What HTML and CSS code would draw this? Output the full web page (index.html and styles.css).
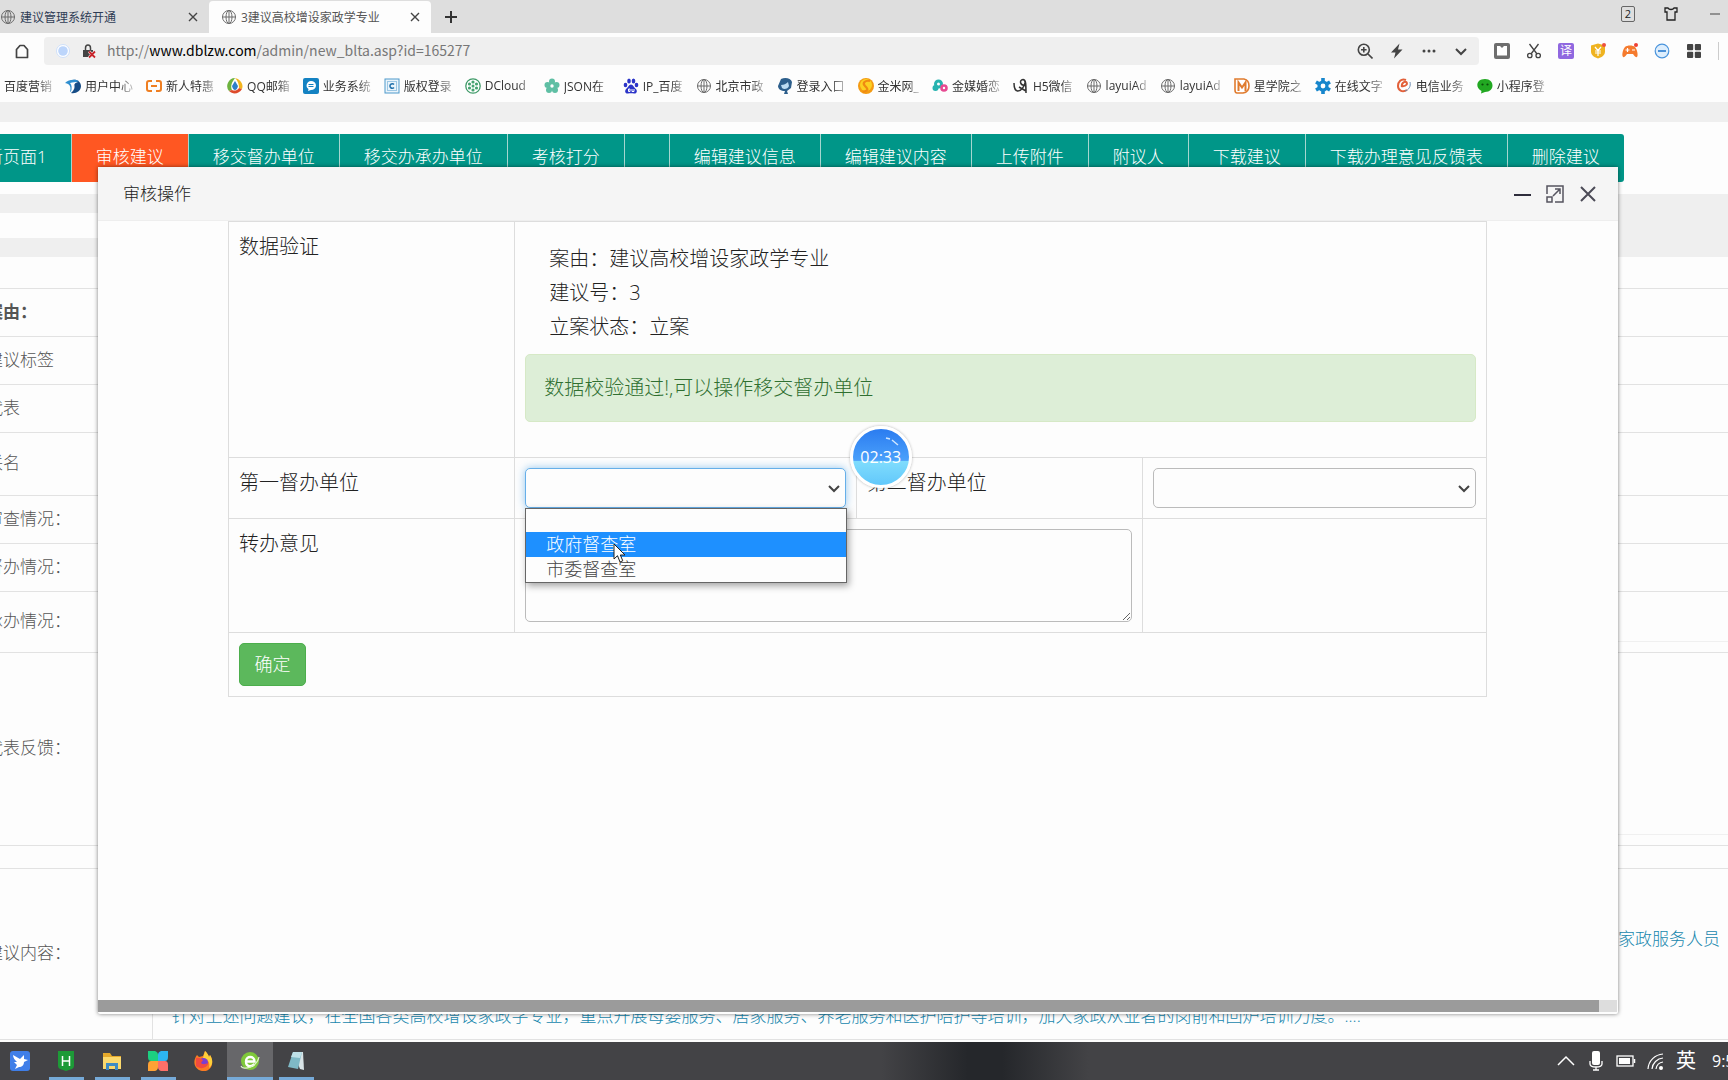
FILE: index.html
```html
<!DOCTYPE html>
<html lang="zh-CN">
<head>
<meta charset="utf-8">
<title>3建议高校增设家政学专业</title>
<link rel="stylesheet" href="styles.css">
</head>
<body>
<svg class="defs" aria-hidden="true">
  <symbol id="globe" viewBox="0 0 16 16"><g fill="none" stroke="#6b6b6b"><circle cx="8" cy="8" r="6.5"/><ellipse cx="8" cy="8" rx="3" ry="6.5"/><path d="M8 1.5v13M1.5 8h13"/></g></symbol>
  <symbol id="cross" viewBox="0 0 16 16"><path d="M4 4l8 8M12 4l-8 8" stroke="#444" stroke-width="1.4" fill="none"/></symbol>
  <symbol id="chevron" viewBox="0 0 16 16"><path d="M3 6l5 5 5-5" stroke="#444" stroke-width="2" fill="none"/></symbol>
</svg>

<header class="browser">
  <div class="tabs">
    <div class="tab"><svg class="ic"><use href="#globe"/></svg><span class="tab-name">建议管理系统开通</span><button class="plain" aria-label="关闭标签"><svg class="ic"><use href="#cross"/></svg></button></div>
    <div class="tab tab-on"><svg class="ic"><use href="#globe"/></svg><span class="tab-name">3建议高校增设家政学专业</span><button class="plain" aria-label="关闭标签"><svg class="ic"><use href="#cross"/></svg></button></div>
    <button class="plain new-tab" aria-label="新标签"><svg class="ic" viewBox="0 0 16 16"><path d="M8 2v12M2 8h12" stroke="#333" stroke-width="2"/></svg></button>
    <div class="win-tools">
      <span class="count">2</span>
      <svg class="ic" viewBox="0 0 16 16"><path d="M5 2H2v4h2v8h8V6h2V2h-3c-1 2-5 2-6 0z" fill="none" stroke="#222" stroke-width="1.3"/></svg>
      <svg class="ic" viewBox="0 0 16 16"><path d="M3 8h10" stroke="#444"/></svg>
    </div>
  </div>

  <div class="address-row">
    <button class="plain" aria-label="主页"><svg class="ic" viewBox="0 0 16 16"><path d="M2.500 14.500V6.500L6 2.500h4l3.500 4v8z" fill="none" stroke="#444" stroke-width="1.700" stroke-linejoin="round"/></svg></button>
    <div class="address">
      <svg class="ic" viewBox="0 0 16 16"><circle cx="8" cy="8" r="6.500" fill="#fff" stroke="#cfe0fa"/><circle cx="8" cy="8" r="4.800" fill="#bcd5fb"/></svg>
      <svg class="ic" viewBox="0 0 16 16"><path d="M4.500 7V5a2.500 3 0 0 1 5 0v2" fill="none" stroke="#444" stroke-width="1.500"/><rect x="2" y="7" width="10" height="7" fill="#444"/><path d="M8 8.500l6 6M14 8.500l-6 6" stroke="#fff" stroke-width="3"/><path d="M8 8.500l6 6M14 8.500l-6 6" stroke="#c8252c" stroke-width="1.900"/></svg>
      <span class="url">http://<b>www.dblzw.com</b>/admin/new_blta.asp?id=165277</span>
      <div class="address-tools">
        <svg class="ic" viewBox="0 0 16 16"><g fill="none" stroke="#444" stroke-width="1.600"><circle cx="6.800" cy="6.800" r="5.500"/><path d="M11 11l4.500 4.500M4 6.800h5.600M6.800 4v5.600"/></g></svg>
        <svg class="ic" viewBox="0 0 16 16"><path d="M10.500 0.500L2 9.500h4.500L5 15.500l8.500-9H9z" fill="#444"/></svg>
        <svg class="ic" viewBox="0 0 16 16"><g fill="#444"><circle cx="3" cy="8" r="1.500"/><circle cx="8" cy="8" r="1.500"/><circle cx="13" cy="8" r="1.500"/></g></svg>
        <svg class="ic"><use href="#chevron"/></svg>
      </div>
    </div>
    <div class="extensions">
      <svg class="ic" viewBox="0 0 16 16"><rect width="16" height="16" rx="2" fill="#6e6e6e"/><path d="M3 3l3 0 2 2 2-2 3 0v9.500H3z" fill="#fff"/></svg>
      <svg class="ic" viewBox="0 0 16 16"><g fill="none" stroke="#444" stroke-width="1.300"><path d="M3.500 1l7.500 10M12.500 1L5 11"/><circle cx="3.800" cy="12.500" r="2.200"/><circle cx="12.200" cy="12.500" r="2.200"/></g></svg>
      <span class="translate">译</span>
      <svg class="ic" viewBox="0 0 16 16"><path d="M8 0.500l7 2v6c0 4-4 6-7 7-3-1-7-3-7-7v-6z" fill="#efb320"/><path d="M5 4l3 3.500L11 4M5 8h6M5 10h6M8 7.500V13" stroke="#fff" fill="none" stroke-width="1.200"/><circle cx="14" cy="2" r="2" fill="#ee5140"/></svg>
      <svg class="ic" viewBox="0 0 16 16"><path d="M3 4c2-2 8-2 10 0 2 2 3 7 2.500 9-.5 2-2 1.500-4.500-2H5c-2.500 3.500-4 4-4.500 2C0 11 1 6 3 4z" fill="#f57b2e"/><path d="M5.500 5v4M3.500 7h4M10 7h3" stroke="#fff" stroke-width="1.200"/><circle cx="14" cy="2" r="2" fill="#ee4035"/></svg>
      <svg class="ic" viewBox="0 0 16 16"><circle cx="8" cy="8" r="6.800" fill="#ddeefd" stroke="#4a94dc" stroke-width="1.200"/><path d="M4 8h8" stroke="#3a86d4" stroke-width="1.800"/></svg>
      <svg class="ic" viewBox="0 0 16 16"><g fill="#444"><rect x="1" y="1" width="6.200" height="6.200" rx="1"/><rect x="8.800" y="1" width="6.200" height="6.200" rx="1"/><rect x="1" y="8.800" width="6.200" height="6.200" rx="1"/><rect x="8.800" y="8.800" width="6.200" height="6.200" rx="1"/></g></svg>
      <span class="rule"></span>
    </div>
  </div>

  <nav class="bookmarks">
    <a href="#"><span>百度营销</span></a>
    <a href="#"><svg class="ic" viewBox="0 0 16 16"><path d="M5 3c5-3 11 0 11 5s-5 8-10 7c4-3 4-7 3-9z" fill="#164c86"/><path d="M0 5c4-4 10-4 14-2-4 1-6 3-6 6 0 2-1 4-3 5 1-4 1-8-5-9z" fill="#2f8fd0"/><path d="M5 5c3-1 5-1 8-1-4 1-5 4-5 8l-2 2c1-4 1-7-1-9z" fill="#fff"/></svg><span>用户中心</span></a>
    <a href="#"><svg class="ic" viewBox="0 0 16 16"><path d="M6 3H3Q1 3 1 5v6q0 2 2 2h3M10 3h3q2 0 2 2v6q0 2-2 2h-3M5 8h6" fill="none" stroke="#ef7f22" stroke-width="2"/></svg><span>新人特惠</span></a>
    <a href="#"><svg class="ic" viewBox="0 0 16 16"><path d="M8 0a8 8 0 0 0-6 13l3-1C3 8 5 4 8 0z" fill="#6db33f"/><path d="M8 0c5 1 9 6 7 11l-3-1c0-4-1-7-4-10z" fill="#f3b51e"/><path d="M2 13c4 4 10 3 13-2l-3-1c-2 3-5 3-7 2z" fill="#de4a2b"/><path d="M8 3l3 5q-1 4-3 4T5 8z" fill="#2d7fc9"/></svg><span>QQ邮箱</span></a>
    <a href="#"><svg class="ic" viewBox="0 0 16 16"><rect width="16" height="16" rx="2" fill="#1482c2"/><path d="M8 3a5 4.500 0 0 1 0 9l-3 1 .5-2A5 4.500 0 0 1 8 3z" fill="#fff"/><path d="M5.500 6.500h5M5.500 8.500h5" stroke="#1482c2"/></svg><span>业务系统</span></a>
    <a href="#"><svg class="ic" viewBox="0 0 16 16"><rect x="1" y="1" width="14" height="14" fill="#eaf4fb" stroke="#4f9acb"/><rect x="3.500" y="3.500" width="9" height="9" fill="none" stroke="#9cc7e4"/><path d="M10 6.500a2.300 2.300 0 1 0 0 3" fill="none" stroke="#2272ac" stroke-width="1.500"/></svg><span>版权登录</span></a>
    <a href="#"><svg class="ic" viewBox="0 0 16 16"><circle cx="8" cy="8" r="7.200" fill="#fff" stroke="#3f9a68" stroke-width="1.300"/><g fill="#46a370"><circle cx="8" cy="8" r="1.500"/><circle cx="8" cy="4" r="1.600"/><circle cx="8" cy="12" r="1.600"/><circle cx="4.500" cy="6" r="1.600"/><circle cx="11.500" cy="6" r="1.600"/><circle cx="4.500" cy="10" r="1.600"/><circle cx="11.500" cy="10" r="1.600"/></g></svg><span class="wide">DCloud</span></a>
    <a href="#"><svg class="ic" viewBox="0 0 16 16"><g fill="#5fbfa4"><circle cx="8" cy="3.500" r="3"/><circle cx="3.500" cy="7" r="3"/><circle cx="12.500" cy="7" r="3"/><circle cx="5" cy="12" r="3"/><circle cx="11" cy="12" r="3"/><circle cx="8" cy="8" r="4"/></g><circle cx="8" cy="8" r="1.700" fill="#fff"/></svg><span class="wide">JSON在</span></a>
    <a href="#"><svg class="ic" viewBox="0 0 16 16"><g fill="#2b34c8"><ellipse cx="2.500" cy="7" rx="1.800" ry="2.300"/><ellipse cx="6" cy="3" rx="1.800" ry="2.500"/><ellipse cx="10.500" cy="3" rx="1.800" ry="2.500"/><ellipse cx="13.500" cy="7" rx="1.800" ry="2.300"/><path d="M8 6.500c2 0 3 3 5 4.500 2 3 0 5-2 4.500-2-.5-4-.5-6 0-2 .5-4-1.500-2-4.500C5 9.500 6 6.500 8 6.500z"/></g><path d="M5.500 11h1.500v2.500H5.500zM9 11v2.500h2V11" fill="none" stroke="#fff"/></svg><span>IP_百度</span></a>
    <a href="#"><svg class="ic"><use href="#globe"/></svg><span>北京市政</span></a>
    <a href="#"><svg class="ic" viewBox="0 0 16 16"><path d="M4 1c4-2 10-1 11 3l-1 6-4 3 1 3H7l1-3c-4 0-7-2-7-5z" fill="#2d5f8c"/><path d="M4 7c3 0 5-1 7-3l1 4c-1 3-5 4-7 2z" fill="#bcdcf2"/></svg><span>登录入口</span></a>
    <a href="#"><svg class="ic" viewBox="0 0 16 16"><circle cx="8" cy="8" r="8" fill="#f49b13"/><circle cx="8" cy="7" r="6" fill="#fcd022"/><path d="M12 3C7 2 4 5 7 8s4 4-2 6" stroke="#f08a12" stroke-width="2.200" fill="none"/></svg><span>金米网_</span></a>
    <a href="#"><svg class="ic" viewBox="0 0 16 16"><circle cx="6.500" cy="6" r="3" fill="none" stroke="#27b3b0" stroke-width="3"/><circle cx="3.500" cy="10" r="3" fill="#27b3b0"/><circle cx="12" cy="10" r="2.500" fill="none" stroke="#e64b92" stroke-width="2.600"/></svg><span>金媒婚恋</span></a>
    <a href="#"><svg class="ic" viewBox="0 0 16 16"><path d="M1 5c0 5 1 8 4 8s6-4 7-8M12 7c-5 1-6-5-2-5.500 3 0 3 5 3 13.500M6 9l7 4" fill="none" stroke="#333" stroke-width="1.500"/></svg><span>H5微信</span></a>
    <a href="#"><svg class="ic"><use href="#globe"/></svg><span>layuiAd</span></a>
    <a href="#"><svg class="ic"><use href="#globe"/></svg><span>layuiAd</span></a>
    <a href="#"><svg class="ic" viewBox="0 0 16 16"><path d="M1 1h9q5 1 5 7t-6 7H3q-2 0-2-3z" fill="#fff" stroke="#e07b2e" stroke-width="1.600"/><path d="M4.500 13V4.500l3.500 5 3.500-5V13" fill="none" stroke="#e07b2e" stroke-width="2"/></svg><span>星学院之</span></a>
    <a href="#"><svg class="ic" viewBox="0 0 16 16"><path d="M8 0v16M1 4l14 8M1 12l14-8" stroke="#1786cc" stroke-width="3.600"/><circle cx="8" cy="8" r="4" fill="#fff" stroke="#1786cc" stroke-width="3.200"/></svg><span>在线文字</span></a>
    <a href="#"><svg class="ic" viewBox="0 0 16 16"><path d="M10 2C5 0 2 4 2 8s4 7 9 4M5 8c6 1 7-3 5-4s-5 2-4 5" fill="none" stroke="#e2603a" stroke-width="2"/><path d="M14 4c1 4-1 8-5 9" fill="none" stroke="#6f8fb5"/></svg><span>电信业务</span></a>
    <a href="#"><svg class="ic" viewBox="0 0 16 16"><path d="M8 1c10 0 10 13 0 13l-4 1.500.5-2.500C-2 10-1 1 8 1z" fill="#22a822"/><circle cx="5.500" cy="6.500" r="1.100" fill="#0b4d0b"/><circle cx="10.500" cy="6.500" r="1.100" fill="#0b4d0b"/></svg><span>小程序登</span></a>
  </nav>
</header>

<main class="page">
  <div class="toolbar-wrap">
    <div class="toolbar">
      <button>新页面1</button><button class="hot">审核建议</button><button>移交督办单位</button><button>移交办承办单位</button><button>考核打分</button><button class="blank" aria-label="空白"></button><button>编辑建议信息</button><button>编辑建议内容</button><button>上传附件</button><button>附议人</button><button>下载建议</button><button>下载办理意见反馈表</button><button>删除建议</button>
    </div>
  </div>
  <div class="band"><div class="band-card"></div></div>
  <table class="detail">
    <colgroup><col class="detail-label"><col></colgroup>
    <tbody>
      <tr class="h31"><th></th><td></td></tr>
      <tr class="h48"><th class="strong">案由：</th><td></td></tr>
      <tr class="h48"><th>建议标签</th><td></td></tr>
      <tr class="h48"><th>代表</th><td></td></tr>
      <tr class="h63"><th>联名</th><td></td></tr>
      <tr class="h48"><th>审查情况：</th><td></td></tr>
      <tr class="h48"><th>督办情况：</th><td></td></tr>
      <tr class="h61"><th>承办情况：</th><td><div class="inner inner-short"></div></td></tr>
      <tr class="h193"><th>代表反馈：</th><td><div class="inner inner-tall"></div></td></tr>
      <tr class="h23"><th></th><td></td></tr>
      <tr class="h171"><th>建议内容：</th><td class="body-text"><a href="#" class="line-end">家政服务人员</a><a href="#">针对上述问题建议，在全国各类高校增设家政学专业，重点开展母婴服务、居家服务、养老服务和医护陪护等培训，加大家政从业者的岗前和回炉培训力度。....</a></td></tr>
    </tbody>
  </table>

  <section class="modal" role="dialog" aria-labelledby="modal-title">
    <div class="modal-head">
      <h1 id="modal-title">审核操作</h1>
      <div class="modal-tools">
        <button class="plain" aria-label="最小化"><svg viewBox="0 0 18 18"><path d="M1 10h17" stroke="#2e2d3c" stroke-width="2"/></svg></button>
        <button class="plain" aria-label="最大化"><svg viewBox="0 0 18 18"><g fill="none" stroke="#55545f" stroke-width="1.500"><path d="M1 9V1h16v16H9"/><path d="M1 12h5v5H1zM7 11l7-7M9 4h5v5"/></g></svg></button>
        <button class="plain" aria-label="关闭"><svg viewBox="0 0 18 18"><path d="M2 2l14 14M16 2L2 16" stroke="#4c4b57" stroke-width="2"/></svg></button>
      </div>
    </div>
    <div class="modal-body">
      <table class="form">
        <colgroup><col class="c1"><col class="c2"><col class="c1"><col class="c3"></colgroup>
        <tbody>
          <tr>
            <td>数据验证</td>
            <td colspan="3" class="check">
              <div class="facts"><p>案由：建议高校增设家政学专业</p><p>建议号：3</p><p>立案状态：立案</p></div>
              <div class="alert">数据校验通过!,可以操作移交督办单位</div>
            </td>
          </tr>
          <tr>
            <td><label for="unit1">第一督办单位</label></td>
            <td>
              <div class="select-box">
                <select id="unit1" class="focus"><option></option></select>
                <svg class="ic arrow"><use href="#chevron"/></svg>
                <ul class="options" role="listbox">
                  <li role="option"></li><li role="option" class="picked">政府督查室</li><li role="option">市委督查室</li>
                </ul>
                <svg class="pointer" viewBox="0 0 13 20"><path d="M1 1v15l3.500-3.300L7 19l2.800-1.200L7.300 12H12z" fill="#fff" stroke="#222"/></svg>
              </div>
            </td>
            <td class="second">
              <label for="unit2">第二督办单位</label>
              <div class="timer">02:33<svg viewBox="0 0 56 56"><path d="M33 9l4 1M39 11l6 5" stroke="#cfe6ff" stroke-width="1.500" fill="none"/></svg></div>
            </td>
            <td><div class="select-box"><select id="unit2"><option></option></select><svg class="ic arrow"><use href="#chevron"/></svg></div></td>
          </tr>
          <tr>
            <td><label for="opinion">转办意见</label></td>
            <td colspan="2"><textarea id="opinion"></textarea></td>
            <td></td>
          </tr>
          <tr><td colspan="4"><button class="submit">确定</button></td></tr>
        </tbody>
      </table>
    </div>
    <div class="scroll"><div class="thumb"></div></div>
  </section>
</main>

<footer class="taskbar">
  <div class="apps">
    <button class="app" aria-label="飞鸟"><svg viewBox="0 0 20 20"><rect width="20" height="20" rx="3" fill="#3f7ee8"/><path d="M3 4l7 4 4-4 0 4 4 1-4 2c0 3-2 5-5 5l-4 2 2-4-3-3 3 0c-2-2-4-4-4-7z" fill="#fff"/></svg></button>
    <button class="app run" aria-label="HBuilder"><svg viewBox="0 0 20 20"><path d="M2 0h16v15q0 2-2 3l-6 2-6-2q-2-1-2-3z" fill="#1d9a37"/><path d="M6.500 5v10M13.500 5v10M6.500 10h7" stroke="#fff" stroke-width="1.500"/></svg></button>
    <button class="app run" aria-label="文件夹"><svg viewBox="0 0 20 20"><path d="M1 2h7l2 3h9v13H1z" fill="#e5a92b"/><path d="M1 6h18v12H1z" fill="#fbd96d"/><path d="M4 19v-7h12v7h-3v-4H7v4z" fill="#3f8cc4"/></svg></button>
    <button class="app run" aria-label="四叶草"><svg viewBox="0 0 20 20"><path d="M0 0h7q3 1 3 4v6H3Q0 10 0 6z" fill="#1cd081"/><path d="M20 0h-7q-3 1-3 4v6h7q3 0 3-4z" fill="#2cb5f2"/><path d="M0 20h7q3-1 3-4v-6H3q-3 0-3 4z" fill="#ffa235"/><path d="M20 20h-7q-3-1-3-4v-6h7q3 0 3 4z" fill="#fd7069"/></svg></button>
    <button class="app" aria-label="Firefox"><svg viewBox="0 0 20 20"><path d="M3 4l2 2 4-1 2-5c2 2 3 3 4 6l1-2c5 8 1 16-6 16C2 20-3 12 3 4z" fill="#fb7b22"/><path d="M11 0c2 2 3 3 4 6l1-2c4 6 2 11-1 13 2-7-3-9-6-10z" fill="#fdd03a"/><circle cx="9.500" cy="11.500" r="4.500" fill="#7c3fd0"/><path d="M2 7c3-1 5 1 7 2l-2 3c2 2 5 1 7 0-1 5-7 7-12 3z" fill="#f24a3f"/></svg></button>
    <button class="app active" aria-label="浏览器"><svg viewBox="0 0 20 20"><circle cx="10" cy="10" r="9" fill="#7fc83a"/><path d="M6 10.500h8.500c0-6-8.500-6-8.500 0s6 5.500 8.500 2.500" fill="none" stroke="#fff" stroke-width="2.400"/><path d="M1 15c2 5 16 1 18-9" fill="none" stroke="#dff3c6" stroke-width="1.200"/></svg></button>
    <button class="app run" aria-label="记事本"><svg viewBox="0 0 20 20"><path d="M7 1h10l1 18-4-1z" fill="#d8e3e6"/><path d="M7 1h9l-4 17-10-2z" fill="#7fb9c6"/><path d="M7 1h9l-2 6-9-1z" fill="#bfe1e8"/></svg></button>
  </div>
  <div class="tray">
    <svg viewBox="0 0 20 20"><path d="M2 14l8-8 8 8" fill="none" stroke="#fff" stroke-width="1.500"/></svg>
    <svg viewBox="0 0 20 20"><rect x="6" y="0" width="8" height="14" rx="2" fill="#fff"/><path d="M4 10v3q0 3 6 3t6-3v-3M10 16v3M7 19h6" fill="none" stroke="#fff" stroke-width="1.300"/></svg>
    <svg viewBox="0 0 20 20"><rect x="1" y="5" width="16" height="10" fill="none" stroke="#fff" stroke-width="1.300"/><rect x="3" y="7" width="11" height="6" fill="#fff"/><path d="M18.500 8v4" stroke="#fff" stroke-width="1.500"/></svg>
    <svg viewBox="0 0 20 20"><g fill="none" stroke="#fff" stroke-width="1.200"><path d="M2 18A16 16 0 0 1 17 3M6 18A12 12 0 0 1 17 7M10 18a8 8 0 0 1 7-7"/></g><circle cx="15" cy="17" r="2" fill="#fff"/></svg>
    <span class="ime">英</span>
    <span class="clock">9:5</span>
  </div>
</footer>
</body>
</html>
```
FILE: styles.css
```css
* { box-sizing: border-box; }
body {
  margin: 0;
  height: 100vh;
  display: flex;
  flex-direction: column;
  overflow: hidden;
  background: #fdfdfd;
  color: #222;
  font-family: "Open Sans", "Noto Sans CJK SC", sans-serif;
  font-size: 12px;
}
button, select, textarea { font-family: inherit; }
a { text-decoration: none; }
.defs { position: absolute; width: 0; height: 0; }
.ic { width: 16px; height: 16px; flex: none; display: block; }
.plain { border: 0; background: none; padding: 0; display: flex; }

/* browser frame */
.browser { flex: none; background: #fdfdfd; }
.tabs { display: flex; height: 33px; background: #dedede; align-items: stretch; }
.tab { display: flex; align-items: center; gap: 4px; width: 209px; padding: 0 8px 0 0; color: #2e3c55; }
.tab-on { width: 222px; margin-top: 1px; padding: 0 8px 0 12px; background: #fdfdfd; border-radius: 4px 4px 0 0; color: #555; }
.tab-name { flex: 1; white-space: nowrap; }
.new-tab { align-items: center; margin-left: 12px; }
.win-tools { margin-left: auto; display: flex; align-items: center; gap: 28px; padding: 0 5px 6px 0; }
.count { width: 14px; height: 16px; border: 1px solid #666; border-radius: 2px; font-size: 11px; line-height: 14px; text-align: center; }
.address-row { display: flex; align-items: center; height: 36px; padding-left: 14px; }
.address { flex: 1; display: flex; align-items: center; gap: 10px; height: 28px; margin-left: 14px; padding: 0 10px 0 11px; background: #efefef; border-radius: 4px; }
.url { font-family: "Noto Sans CJK SC", sans-serif; font-size: 14px; line-height: 20px; padding-bottom: 2px; color: #777; }
.url b { font-weight: 400; color: #000; }
.address-tools { margin-left: auto; display: flex; gap: 16px; }
.extensions { display: flex; align-items: center; gap: 16px; padding: 0 9px 0 15px; }
.translate { width: 16px; height: 16px; background: #9068e0; color: #fff; border-radius: 2px; line-height: 16px; text-align: center; }
.rule { width: 1px; height: 18px; background: #ccc; }
.bookmarks { display: flex; align-items: center; gap: 13px; height: 33px; padding-left: 4px; overflow: hidden; }
.bookmarks a { display: flex; align-items: center; gap: 4px; color: #333; flex: none; }
.bookmarks span { white-space: nowrap; -webkit-mask-image: linear-gradient(90deg, #000 70%, rgba(0,0,0,.3)); mask-image: linear-gradient(90deg, #000 70%, rgba(0,0,0,.3)); }
.bookmarks .wide { min-width: 46px; }

/* page below the dialog */
.page { flex: 1; min-height: 0; position: relative; overflow: hidden; border-top: 20px solid #efefef; }
.toolbar-wrap { padding: 12px 0; overflow: hidden; }
.toolbar { display: flex; margin-left: -38px; }
.toolbar button { flex: none; height: 48px; padding: 0 24px 6px; border: 0; border-right: 1px solid #a5d6cf; background: #009688; color: #fff; font-size: 17px; font-weight: 300; }
.toolbar button:last-child { border-right: 0; border-radius: 0 3px 3px 0; }
.toolbar .hot { background: #ff5722; }
.toolbar .blank { padding: 0 22px; }
.band { height: 63px; padding: 19px 0; background: #efefef; }
.band-card { width: 60%; height: 25px; background: #fdfdfd; }
.detail { width: calc(100% + 38px); margin-left: -38px; table-layout: fixed; border-collapse: collapse; font-size: 17px; color: #555; }
.detail-label { width: 190px; }
.detail th, .detail td { padding: 0; border-bottom: 1px solid #e2e2e2; }
.detail th { padding: 0 0 4px 24px; border-right: 1px solid #e2e2e2; text-align: left; font-weight: 300; white-space: nowrap; }
.detail .strong { font-weight: 700; }
.h23 { height: 23px; }
.h31 { height: 31px; }
.h48 { height: 48px; }
.h61 { height: 61px; }
.h63 { height: 63px; }
.h171 { height: 171px; }
.h193 { height: 193px; }
.inner { border-bottom: 1px solid #f0f0f0; margin-bottom: 10px; }
.inner-short { height: 50px; }
.inner-tall { height: 182px; }
.detail .body-text { vertical-align: top; padding: 57px 8px 0 19px; line-height: 26px; }
.body-text a { display: block; color: #1787ad; font-weight: 300; white-space: nowrap; }
.body-text .line-end { text-align: right; margin-bottom: 51px; }

/* dialog */
.modal { position: absolute; top: 45px; bottom: 28px; left: 98px; right: 110px; display: flex; flex-direction: column; background: #fdfdfd; border-radius: 2px; box-shadow: 0 0 4px rgba(0,0,0,.5); }
.modal-head { display: flex; align-items: center; justify-content: space-between; height: 54px; padding: 0 21px 0 25px; background: #f5f5f5; border-bottom: 1px solid #eee; }
.modal-head h1 { margin: 0; padding-bottom: 3px; font-size: 17px; font-weight: 300; }
.modal-tools { display: flex; gap: 15px; }
.modal-tools svg { width: 18px; height: 18px; }
.modal-body { flex: 1; padding: 0 131px 0 130px; }
.form { width: 100%; table-layout: fixed; border-collapse: collapse; font-size: 20px; font-weight: 300; line-height: 30px; }
.c1 { width: 22.75%; }
.c2 { width: 27.15%; }
.c3 { width: 27.35%; }
.form td { padding: 10px; border: 1px solid #ddd; vertical-align: top; }
.facts { padding: 10px 24px; }
.facts p { margin: 0; line-height: 34px; }
.alert { height: 68px; margin-bottom: 25px; padding: 18px; background: #ddeed7; border: 1px solid #d6e9c6; border-radius: 5px; color: #2f6f30; }
.select-box { position: relative; height: 40px; }
select, textarea { display: block; width: 100%; border: 1px solid #bbb; border-radius: 5px; background: #fdfdfd; }
select { height: 40px; appearance: none; }
.focus { border-color: #66afe9; box-shadow: 0 0 9px rgba(102,175,233,.7); }
.arrow { position: absolute; right: 4px; top: 12px; }
textarea { height: 93px; }
.options { position: absolute; z-index: 2; top: 40px; left: 0; right: -1px; margin: 0; padding: 0 0 1px; list-style: none; border: 1px solid #666; background: #fdfdfd; box-shadow: 2px 3px 7px rgba(0,0,0,.35); font-size: 18px; color: #444; }
.options li { height: 24px; padding-left: 20px; line-height: 24px; }
.options li:first-child { height: 23px; }
.options .picked { height: 25px; background: #1e90ff; color: #fff; }
.pointer { position: absolute; z-index: 3; left: 88px; top: 75px; width: 13px; height: 20px; }
.second { position: relative; }
.timer { position: absolute; left: -7px; top: -32px; width: 62px; height: 62px; border: 3px solid #fff; border-radius: 50%; background: linear-gradient(#2b7cf0, #4aa0fb 56%, #7fdcfd 58%, #62c8fb); box-shadow: 0 0 3px rgba(0,0,0,.3); color: #fff; font-size: 16px; font-weight: 400; line-height: 56px; text-align: center; }
.timer svg { position: absolute; inset: 0; }
.submit { display: block; height: 43px; width: 67px; border: 1px solid #4cae4c; border-radius: 5px; background: #5cb85c; color: #fff; font-size: 18px; font-weight: 300; padding: 0 0 4px; }
.scroll { height: 12px; margin: 0 1px 2px 0; background: #ddd; }
.thumb { width: 98.8%; height: 12px; background: #9b9b9b; }

/* taskbar */
.taskbar { flex: none; display: flex; justify-content: space-between; height: 38px; overflow: hidden; background: linear-gradient(90deg, #434346 0, #434346 51%, #25272b 56%, #25272b 58%, #434346 63%); }
.apps { display: flex; margin-left: -3px; }
.app { width: 46px; height: 38px; padding: 9px 13px; border: 0; background: none; }
.app svg { width: 20px; height: 20px; display: block; }
.run { background: linear-gradient(#76aad8, #76aad8) center bottom / 35px 3px no-repeat; }
.active { background: linear-gradient(#76aad8, #76aad8) center bottom / 100% 3px no-repeat #67676a; }
.tray { display: flex; align-items: center; gap: 10px; color: #fff; }
.tray svg { width: 20px; height: 20px; }
.ime { width: 26px; font-size: 20px; line-height: 30px; }
.clock { width: 16px; font-size: 16px; white-space: nowrap; }
```
